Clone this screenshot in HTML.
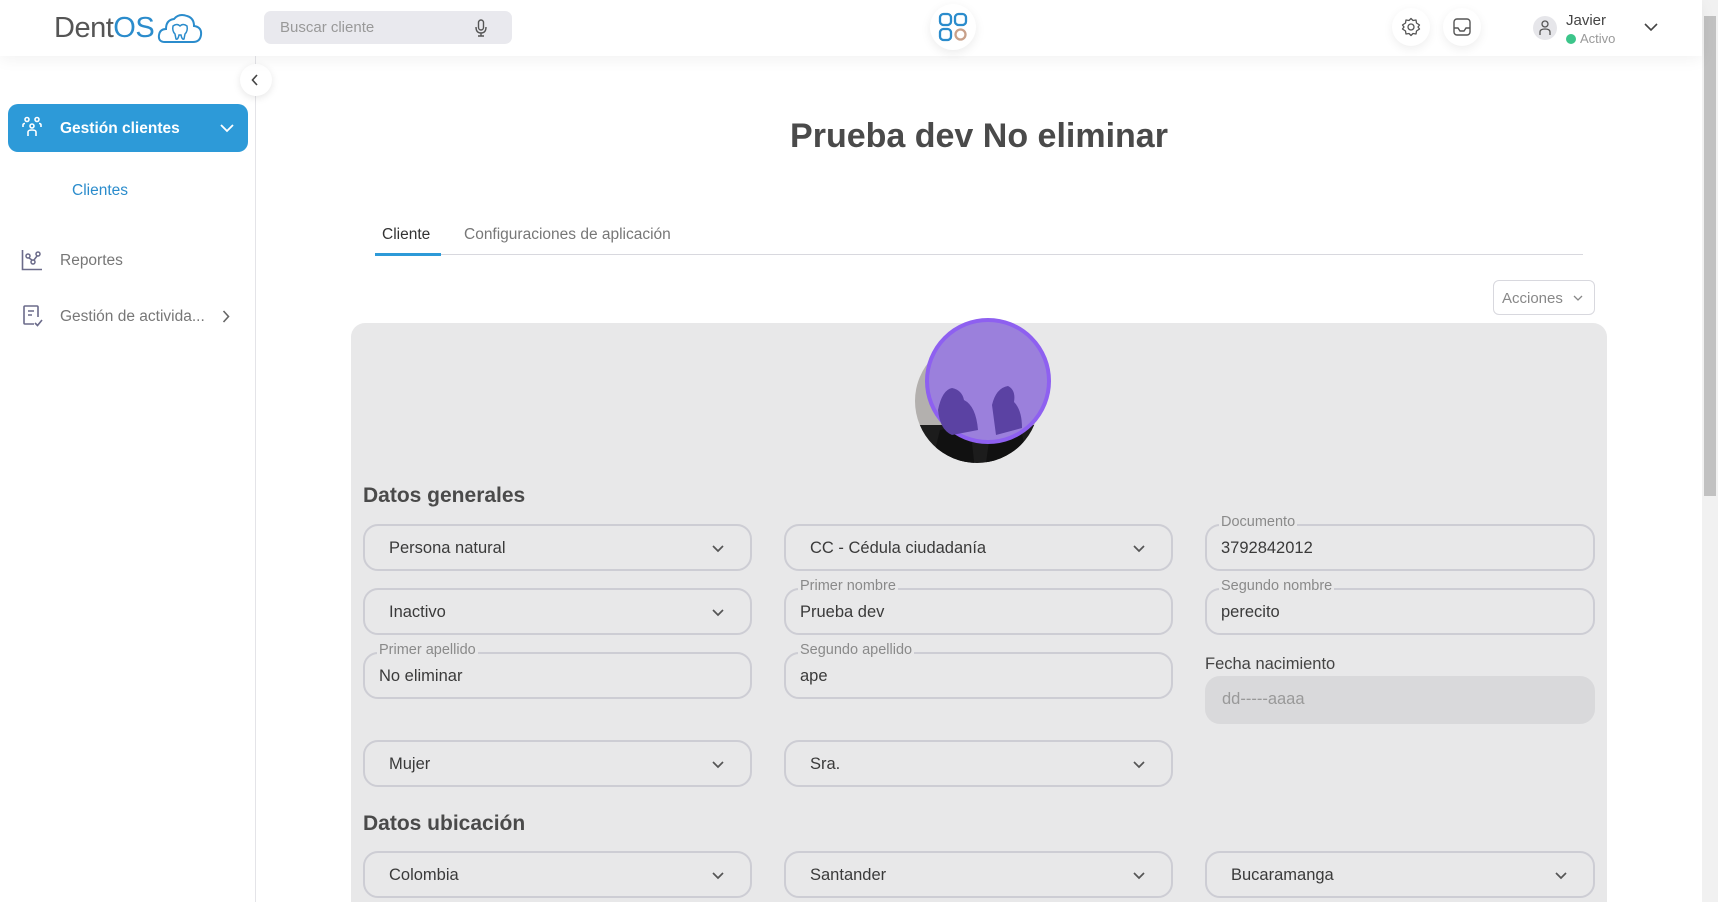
<!DOCTYPE html>
<html style="overflow:hidden;height:902px"><head><meta charset="utf-8"><style>
*{box-sizing:border-box;margin:0;padding:0}
body{width:1718px;height:902px;overflow:hidden;background:#fff;font-family:"Liberation Sans",sans-serif;color:#444;position:relative}
.abs{position:absolute}
.hdr{left:0;top:0;width:1702px;height:56px;background:#fff;box-shadow:0 4px 14px rgba(0,0,0,.05);z-index:2}
.side{left:0;top:56px;width:256px;height:846px;border-right:1px solid #e4e4e8}
.fld{position:absolute;height:47px;border:2px solid #cdcdd4;border-radius:15px;font-size:16.5px;color:#3a3a3a}
.fld .v{position:absolute;left:24px;top:13px}
.fld .vi{position:absolute;left:14px;top:13px}
.fld .chev{position:absolute;right:26px;top:19px}
.lbl{position:absolute;top:-12px;left:12px;font-size:14.5px;color:#8a8a8a;background:#e8e8e9;padding:0 2px}
</style></head><body>
<div class="abs hdr">
  <div class="abs" style="left:54px;top:12px;font-size:29px;color:#555;letter-spacing:-0.5px">Dent<span style="color:#2b8ccc">OS</span></div>
  <svg class="abs" style="left:157px;top:12px" width="46" height="34" viewBox="0 0 46 34"><path d="M8 30 Q1 30 2 23 Q3 17 9 17 Q9 8 17 7 Q22 1 30 4 Q37 6 37 14 Q45 15 44 23 Q43 30 36 30 Z" fill="none" stroke="#2b8ccc" stroke-width="2"/><path d="M16 14 Q20 11 23 14 Q26 11 30 14 Q31 19 28 22 L27 27 Q25 28 24 23 L22 23 Q21 28 19 27 L18 22 Q15 19 16 14Z" fill="none" stroke="#2b8ccc" stroke-width="1.5"/></svg>
  <div class="abs" style="left:264px;top:11px;width:248px;height:33px;background:#e9e9ee;border-radius:7px"><span class="abs" style="left:16px;top:8px;font-size:15px;color:#999">Buscar cliente</span>
   <svg class="abs" style="left:211px;top:8px" width="12" height="18" viewBox="0 0 12 18"><rect x="3.5" y="1" width="5" height="10" rx="2.5" fill="none" stroke="#555" stroke-width="1.4"/><path d="M1 8 Q1 14 6 14 Q11 14 11 8 M6 14 V17 M3 17 H9" fill="none" stroke="#555" stroke-width="1.4"/></svg></div>
  <div class="abs" style="left:930px;top:4px;width:46px;height:46px;border-radius:50%;background:#fff;box-shadow:0 3px 10px rgba(0,0,0,.08)">
   <svg class="abs" style="left:8px;top:8px" width="30" height="30" viewBox="0 0 30 30"><rect x="2" y="2" width="11" height="11" rx="3.5" fill="none" stroke="#2b8ccc" stroke-width="2.3"/><rect x="17" y="2" width="11" height="11" rx="3.5" fill="none" stroke="#2b8ccc" stroke-width="2.3"/><rect x="2" y="17" width="11" height="11" rx="3.5" fill="none" stroke="#2b8ccc" stroke-width="2.3"/><circle cx="22.5" cy="22.5" r="5" fill="none" stroke="#c8a089" stroke-width="2.3"/></svg></div>
  <div class="abs" style="left:1392px;top:8px;width:38px;height:38px;border-radius:50%;box-shadow:0 3px 10px rgba(0,0,0,.07)"><svg class="abs" style="left:9px;top:9px" width="20" height="20" viewBox="0 0 20 20"><circle cx="10" cy="10" r="3" fill="none" stroke="#555" stroke-width="1.3"/><path d="M10 1.5 L12 3.5 L15 3 L15.5 6 L18.5 8 L17 10 L18.5 12 L15.5 14 L15 17 L12 16.5 L10 18.5 L8 16.5 L5 17 L4.5 14 L1.5 12 L3 10 L1.5 8 L4.5 6 L5 3 L8 3.5Z" fill="none" stroke="#555" stroke-width="1.3" stroke-linejoin="round"/></svg></div>
  <div class="abs" style="left:1443px;top:8px;width:38px;height:38px;border-radius:50%;box-shadow:0 3px 10px rgba(0,0,0,.07)"><svg class="abs" style="left:9px;top:9px" width="20" height="20" viewBox="0 0 20 20"><rect x="2" y="2" width="16" height="16" rx="3" fill="none" stroke="#555" stroke-width="1.4"/><path d="M2 11 H6 L8 14 H12 L14 11 H18" fill="none" stroke="#555" stroke-width="1.4"/></svg></div>
  <div class="abs" style="left:1533px;top:16px;width:24px;height:24px;border-radius:50%;background:#e6e6ea"><svg class="abs" style="left:6px;top:4px" width="12" height="16" viewBox="0 0 12 16"><circle cx="6" cy="4" r="3" fill="none" stroke="#555" stroke-width="1.3"/><path d="M1 15 V12 Q1 9 6 9 Q11 9 11 12 V15" fill="none" stroke="#555" stroke-width="1.3"/></svg></div>
  <div class="abs" style="left:1566px;top:12px;font-size:15px;color:#444">Javier</div>
  <div class="abs" style="left:1566px;top:31px;font-size:13px;color:#999"><span style="display:inline-block;width:10px;height:10px;border-radius:50%;background:#3cc58a;margin-right:4px;vertical-align:-1px"></span>Activo</div>
  <svg class="abs" style="left:1644px;top:23px" width="14" height="9" viewBox="0 0 14 9"><path d="M1 1 L7 7 L13 1" fill="none" stroke="#444" stroke-width="1.6"/></svg>
</div>
<div class="abs" style="left:1702px;top:0;width:16px;height:902px;background:#f1f1f1"><div class="abs" style="left:2px;top:16px;width:12px;height:480px;background:#c1c1c1"></div></div>
<div class="abs side"></div>
<div class="abs" style="left:240px;top:64px;width:32px;height:32px;border-radius:50%;background:#fff;box-shadow:0 2px 8px rgba(0,0,0,.1)"><svg class="abs" style="left:11px;top:10px" width="8" height="12" viewBox="0 0 8 12"><path d="M6 1 L1.5 6 L6 11" fill="none" stroke="#444" stroke-width="1.6"/></svg></div>
<div class="abs" style="left:8px;top:104px;width:240px;height:48px;background:#2d9ad8;border-radius:10px;color:#fff">
 <svg class="abs" style="left:13px;top:12px" width="22" height="22" viewBox="0 0 22 22"><circle cx="6" cy="3.5" r="2" fill="none" stroke="#fff" stroke-width="1.6"/><circle cx="16" cy="3.5" r="2" fill="none" stroke="#fff" stroke-width="1.6"/><circle cx="11" cy="10" r="2" fill="none" stroke="#fff" stroke-width="1.6"/><path d="M2 11 V9 Q2 7.5 4 7.5 M20 11 V9 Q20 7.5 18 7.5 M7 20 V16 Q7 14 11 14 Q15 14 15 16 V20" fill="none" stroke="#fff" stroke-width="1.6"/></svg>
 <span class="abs" style="left:52px;top:16px;font-size:15.5px;font-weight:bold">Gestión clientes</span>
 <svg class="abs" style="left:212px;top:20px" width="14" height="9" viewBox="0 0 14 9"><path d="M1 1 L7 7 L13 1" fill="none" stroke="#fff" stroke-width="1.8"/></svg>
</div>
<div class="abs" style="left:72px;top:182px;font-size:15.5px;color:#2b8ccc">Clientes</div>
<svg class="abs" style="left:21px;top:249px" width="22" height="22" viewBox="0 0 22 22"><path d="M1.5 1 V20.5 H21" fill="none" stroke="#6b6b8a" stroke-width="1.6"/><circle cx="7" cy="7" r="2" fill="none" stroke="#6b6b8a" stroke-width="1.5"/><circle cx="12" cy="13" r="2" fill="none" stroke="#6b6b8a" stroke-width="1.5"/><circle cx="17" cy="5" r="2" fill="none" stroke="#6b6b8a" stroke-width="1.5"/><path d="M8 9 L11 11 M13 11 L16 7" stroke="#6b6b8a" stroke-width="1.5"/></svg>
<div class="abs" style="left:60px;top:252px;font-size:15.5px;color:#777">Reportes</div>
<svg class="abs" style="left:22px;top:304px" width="22" height="24" viewBox="0 0 22 24"><path d="M12 20 H3 Q2 20 2 19 V3 Q2 2 3 2 H15 Q16 2 16 3 V13" fill="none" stroke="#6b6b8a" stroke-width="1.6"/><path d="M6 7 H12 M6 11 H10" stroke="#6b6b8a" stroke-width="1.6"/><path d="M13 19 L15.5 21.5 L20 16" fill="none" stroke="#6b6b8a" stroke-width="1.6"/></svg>
<div class="abs" style="left:60px;top:308px;font-size:15.5px;color:#777">Gestión de activida...</div>
<svg class="abs" style="left:222px;top:310px" width="8" height="13" viewBox="0 0 8 13"><path d="M1.5 1 L6.5 6.5 L1.5 12" fill="none" stroke="#666" stroke-width="1.6"/></svg>

<div class="abs" style="left:256px;top:117px;width:1446px;text-align:center;font-size:34px;font-weight:bold;color:#4a4a4a">Prueba dev No eliminar</div>
<div class="abs" style="left:375px;top:254px;width:1208px;height:1px;background:#d8d8de"></div>
<div class="abs" style="left:375px;top:253px;width:66px;height:3px;background:#2d9ad8"></div>
<div class="abs" style="left:382px;top:226px;font-size:15.5px;color:#333">Cliente</div>
<div class="abs" style="left:464px;top:226px;font-size:15.5px;color:#777">Configuraciones de aplicación</div>
<div class="abs" style="left:1493px;top:280px;width:102px;height:35px;border:1px solid #d8d8de;border-radius:6px;font-size:15px;color:#888"><span class="abs" style="left:8px;top:9px">Acciones</span><svg class="abs" style="left:79px;top:14px" width="10" height="7" viewBox="0 0 10 7"><path d="M1 1 L5 5 L9 1" fill="none" stroke="#888" stroke-width="1.3"/></svg></div>

<div class="abs" style="left:351px;top:323px;width:1256px;height:579px;background:#e8e8e9;border-radius:14px 14px 0 0"></div>
<svg class="abs" style="left:900px;top:310px" width="160" height="160" viewBox="0 0 160 160">
 <defs><clipPath id="c1"><circle cx="77" cy="91" r="62"/></clipPath></defs>
 <circle cx="77" cy="91" r="62" fill="#b3b0ae"/>
 <g clip-path="url(#c1)"><rect x="0" y="115" width="160" height="45" fill="#1c1c1c"/><path d="M30 160 L40 120 L70 115 L75 160Z" fill="#111"/><path d="M85 160 L92 110 L120 115 L130 160Z" fill="#111"/></g>
 <circle cx="88" cy="71" r="61" fill="#9b80dc" stroke="#8e60f0" stroke-width="4"/>
 <path d="M38 100 Q42 80 52 78 Q62 80 64 90 Q76 96 78 120 L52 125 Q40 120 38 100Z" fill="#5b42a3"/>
 <path d="M92 95 Q96 78 108 76 Q116 80 114 92 Q122 100 122 118 L96 125Z" fill="#5b42a3"/>
</svg>
<div class="abs" style="left:363px;top:484px;font-size:21px;font-weight:bold;color:#4a4a4a">Datos generales</div>

<div class="fld" style="left:363px;top:524px;width:389px"><span class="v">Persona natural</span><svg class="chev" width="12" height="8" viewBox="0 0 12 8"><path d="M1 1 L6 6 L11 1" fill="none" stroke="#555" stroke-width="1.7"/></svg></div>
<div class="fld" style="left:784px;top:524px;width:389px"><span class="v">CC - Cédula ciudadanía</span><svg class="chev" width="12" height="8" viewBox="0 0 12 8"><path d="M1 1 L6 6 L11 1" fill="none" stroke="#555" stroke-width="1.7"/></svg></div>
<div class="fld" style="left:1205px;top:524px;width:390px"><span class="lbl">Documento</span><span class="vi">3792842012</span></div>

<div class="fld" style="left:363px;top:588px;width:389px"><span class="v">Inactivo</span><svg class="chev" width="12" height="8" viewBox="0 0 12 8"><path d="M1 1 L6 6 L11 1" fill="none" stroke="#555" stroke-width="1.7"/></svg></div>
<div class="fld" style="left:784px;top:588px;width:389px"><span class="lbl">Primer nombre</span><span class="vi">Prueba dev</span></div>
<div class="fld" style="left:1205px;top:588px;width:390px"><span class="lbl">Segundo nombre</span><span class="vi">perecito</span></div>

<div class="fld" style="left:363px;top:652px;width:389px"><span class="lbl">Primer apellido</span><span class="vi">No eliminar</span></div>
<div class="fld" style="left:784px;top:652px;width:389px"><span class="lbl">Segundo apellido</span><span class="vi">ape</span></div>
<div class="abs" style="left:1205px;top:655px;font-size:16.5px;color:#444">Fecha nacimiento</div>
<div class="abs" style="left:1205px;top:676px;width:390px;height:48px;background:#d9d9db;border-radius:15px;font-size:16.5px;color:#999"><span class="abs" style="left:17px;top:14px">dd-----aaaa</span></div>

<div class="fld" style="left:363px;top:740px;width:389px"><span class="v">Mujer</span><svg class="chev" width="12" height="8" viewBox="0 0 12 8"><path d="M1 1 L6 6 L11 1" fill="none" stroke="#555" stroke-width="1.7"/></svg></div>
<div class="fld" style="left:784px;top:740px;width:389px"><span class="v">Sra.</span><svg class="chev" width="12" height="8" viewBox="0 0 12 8"><path d="M1 1 L6 6 L11 1" fill="none" stroke="#555" stroke-width="1.7"/></svg></div>

<div class="abs" style="left:363px;top:812px;font-size:21px;font-weight:bold;color:#4a4a4a">Datos ubicación</div>
<div class="fld" style="left:363px;top:851px;width:389px"><span class="v">Colombia</span><svg class="chev" width="12" height="8" viewBox="0 0 12 8"><path d="M1 1 L6 6 L11 1" fill="none" stroke="#555" stroke-width="1.7"/></svg></div>
<div class="fld" style="left:784px;top:851px;width:389px"><span class="v">Santander</span><svg class="chev" width="12" height="8" viewBox="0 0 12 8"><path d="M1 1 L6 6 L11 1" fill="none" stroke="#555" stroke-width="1.7"/></svg></div>
<div class="fld" style="left:1205px;top:851px;width:390px"><span class="v">Bucaramanga</span><svg class="chev" width="12" height="8" viewBox="0 0 12 8"><path d="M1 1 L6 6 L11 1" fill="none" stroke="#555" stroke-width="1.7"/></svg></div>
</body></html>
